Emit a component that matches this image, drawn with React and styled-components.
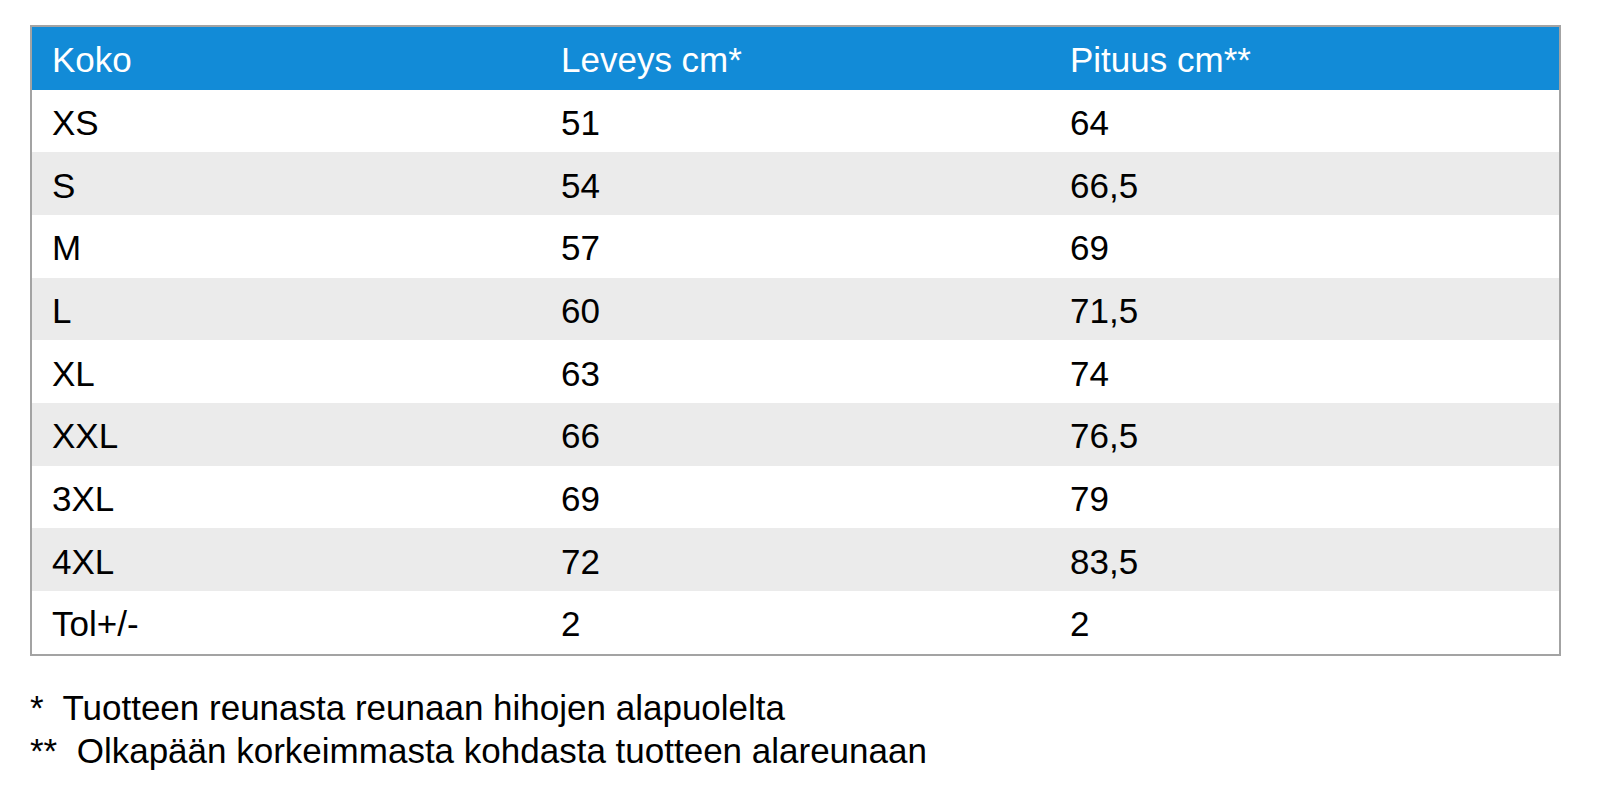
import styled, { createGlobalStyle } from "styled-components";

const GlobalStyle = createGlobalStyle`
  html, body {
    margin: 0;
    padding: 0;
    background: #ffffff;
  }
`;

const Page = styled.main`
  padding: 25px 0 0 30px;
  font-family: "Liberation Sans", Arial, Helvetica, sans-serif;
  color: #000;
`;

const SizeTable = styled.table`
  box-sizing: border-box;
  width: 1531px;
  table-layout: fixed;
  border-collapse: separate;
  border-spacing: 0;
  border: 2px solid #a3a3a3;
`;

const Row = styled.tr`
  height: 62.7px;
  background: ${({ $striped }) => ($striped ? "#ebebeb" : "#ffffff")};
`;

const HeadRow = styled.tr`
  height: 62.5px;
  background: #128bd7;
`;

const HeadCell = styled.th`
  padding: 3px 20px 0;
  text-align: left;
  font-weight: 400;
  font-size: 35px;
  line-height: 1;
  color: #ffffff;
`;

const Cell = styled.td`
  padding: 3px 20px 0;
  font-size: 35px;
  line-height: 1;
  color: #000;
`;

const Notes = styled.div`
  margin-top: 30px;
  font-size: 35px;
  line-height: 43px;
  white-space: pre;
`;

const rows = [
  ["XS", "51", "64"],
  ["S", "54", "66,5"],
  ["M", "57", "69"],
  ["L", "60", "71,5"],
  ["XL", "63", "74"],
  ["XXL", "66", "76,5"],
  ["3XL", "69", "79"],
  ["4XL", "72", "83,5"],
  ["Tol+/-", "2", "2"],
];

export default function App() {
  return (
    <>
      <GlobalStyle />
      <Page>
        <SizeTable>
          <thead>
            <HeadRow>
              <HeadCell>Koko</HeadCell>
              <HeadCell>Leveys cm*</HeadCell>
              <HeadCell>Pituus cm**</HeadCell>
            </HeadRow>
          </thead>
          <tbody>
            {rows.map((r, i) => (
              <Row key={r[0]} $striped={i % 2 === 1}>
                <Cell>{r[0]}</Cell>
                <Cell>{r[1]}</Cell>
                <Cell>{r[2]}</Cell>
              </Row>
            ))}
          </tbody>
        </SizeTable>
        <Notes>
          <div>{"*  Tuotteen reunasta reunaan hihojen alapuolelta"}</div>
          <div>{"**  Olkapään korkeimmasta kohdasta tuotteen alareunaan"}</div>
        </Notes>
      </Page>
    </>
  );
}
